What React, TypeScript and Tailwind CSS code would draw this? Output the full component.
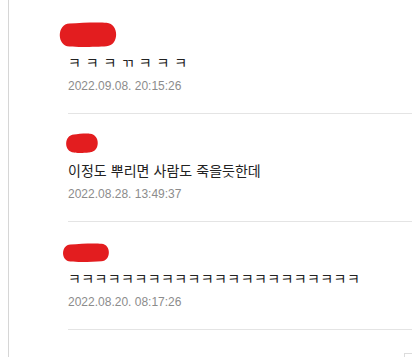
import React from "react";

type Blob = { w: number; h: number; ml: number; dy: number };

const comments: { text: string; date: string; blob: Blob; ls: string }[] = [
  { text: "ㅋ ㅋ ㅋ ㄲ ㅋ ㅋ ㅋ", date: "2022.09.08. 20:15:26", blob: { w: 62, h: 25, ml: -11, dy: -2 }, ls: "0.35px" },
  { text: "이정도 뿌리면 사람도 죽을듯한데", date: "2022.08.28. 13:49:37", blob: { w: 36, h: 20, ml: -4, dy: -1 }, ls: "0px" },
  { text: "ㅋㅋㅋㅋㅋㅋㅋㅋㅋㅋㅋㅋㅋㅋㅋㅋㅋㅋㅋㅋㅋㅋ", date: "2022.08.20. 08:17:26", blob: { w: 50, h: 19, ml: -7, dy: 0 }, ls: "0.4px" },
];

function RedBlob({ b }: { b: Blob }) {
  const { w, h } = b;
  const r = h / 2;
  const d = `M ${r} 1.5 C ${w * 0.4} 0.5, ${w * 0.7} 0, ${w - r} 0.8 C ${w + 0.5} 1.5, ${w + 0.3} ${h - 1}, ${w - r} ${h - 0.8} C ${w * 0.65} ${h - 0.2}, ${w * 0.35} ${h + 0.3}, ${r} ${h - 0.5} C -0.5 ${h - 1}, -0.3 2, ${r} 1.5 Z`;
  return (
    <svg
      width={w}
      height={h}
      viewBox={`0 0 ${w} ${h}`}
      style={{ marginLeft: b.ml, transform: `translateY(${b.dy}px)` }}
      className="overflow-visible"
    >
      <path d={d} fill="#e31d1f" />
    </svg>
  );
}

export default function App() {
  return (
    <div className="relative h-[357px] w-[412px] overflow-hidden bg-white pl-2">
      <div className="h-full border-l border-[#d6d6d6] pl-[59px] pt-[6px]">
        {comments.map((c, i) => (
          <div key={i} className="border-b border-[#e4e4e4] pt-[18px] pb-[18px]">
            <div className="flex h-[24px] items-center mb-[4px]">
              <RedBlob b={c.blob} />
            </div>
            <div
              className="h-[20px] text-[14px] leading-[20px] text-[#222] whitespace-nowrap"
              style={{ fontFamily: '"Noto Sans CJK KR", "Noto Sans", sans-serif', wordSpacing: "1px", letterSpacing: c.ls }}
            >
              {c.text}
            </div>
            <div
              className="mt-[5px] h-[18px] text-[12px] leading-[18px] text-[#8c8c8c]"
              style={{ fontFamily: '"Liberation Sans", Arial, sans-serif' }}
            >
              {c.date}
            </div>
          </div>
        ))}
      </div>
      <div className="absolute left-[404px] top-[353px] h-[10px] w-[10px] border-l border-t border-[#dcdcdc]" />
    </div>
  );
}
